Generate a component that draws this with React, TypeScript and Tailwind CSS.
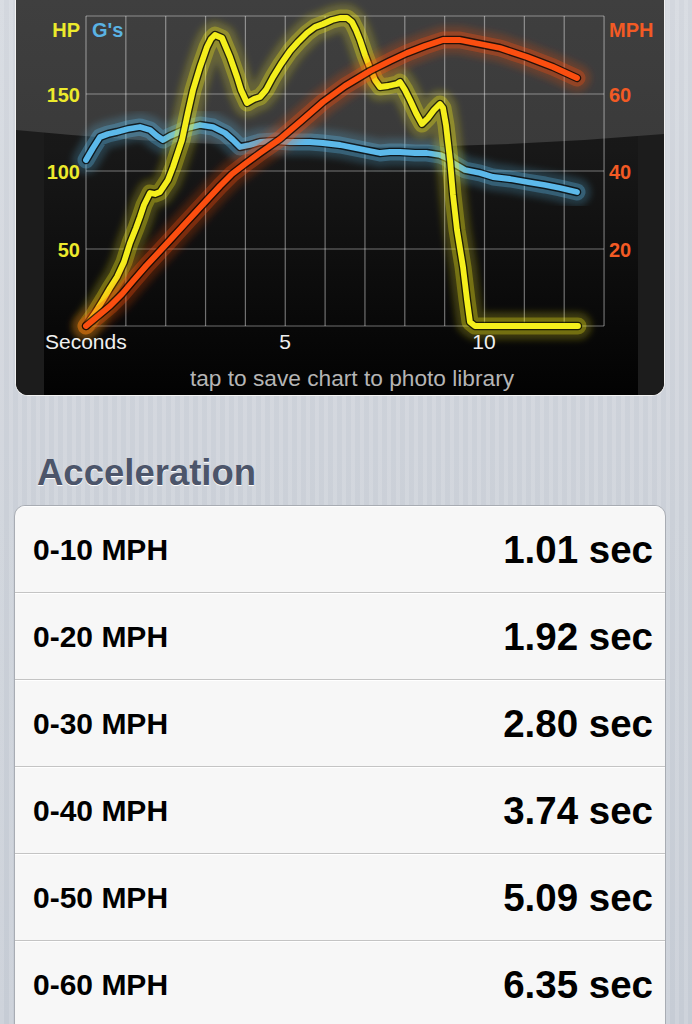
import React from "react";

const X0 = 86;
const DX = 39.85;
const gridX = Array.from({ length: 14 }, (_, i) => X0 + i * DX);
const gridY = [16, 94, 171, 249, 326];

const yellowPts: [number, number][] = [
  [86, 326], [95, 313], [103, 300], [110, 288], [117, 277], [124, 262], [130, 243], [136, 228], [140, 217], [144, 205],
  [147, 199], [150, 193], [155, 194], [160, 192], [164, 186], [168, 180], [173, 167], [178, 152], [182, 140], [188, 112],
  [193, 90], [200, 67], [207, 47], [211, 39], [215, 35], [222, 38], [230, 57], [237, 77], [241, 90], [247, 103],
  [254, 99], [260, 97], [266, 90], [273, 77], [281, 64], [290, 51], [298, 42], [307, 33], [315, 27], [323, 24],
  [332, 20], [340, 18], [347, 18], [352, 22], [356, 30], [360, 40], [365, 55], [370, 68], [375, 80], [380, 87],
  [388, 86], [397, 84], [400, 82], [405, 90], [410, 100], [416, 113], [422, 124], [428, 118], [434, 110], [440, 104],
  [443, 108], [446, 125], [450, 160], [453, 195], [457, 230], [463, 267], [467, 300], [470, 322], [475, 326], [578, 326],
];

const orangePts: [number, number][] = [
  [86, 326], [98, 316], [110, 306], [122, 294], [133, 281], [146, 266], [160, 251], [172, 238], [183, 226], [195, 213],
  [207, 200], [220, 186], [232, 174], [245, 164], [260, 153], [280, 139], [300, 122], [323, 102], [345, 86], [370, 71],
  [390, 61], [407, 53], [425, 46], [443, 40], [460, 40], [480, 44], [500, 48], [527, 57], [553, 67], [577, 78],
];

const bluePts: [number, number][] = [
  [86, 160], [93, 148], [100, 137], [108, 134], [117, 132], [128, 129], [140, 127], [150, 130], [157, 136], [163, 140],
  [170, 136], [177, 133], [188, 128], [200, 125], [213, 127], [225, 133], [233, 140], [240, 147], [250, 145], [260, 142],
  [275, 141], [290, 142], [310, 142], [323, 143], [340, 145], [350, 147], [365, 150], [380, 153], [390, 152], [400, 152],
  [415, 153], [427, 153], [440, 155], [447, 158], [453, 163], [465, 170], [480, 173], [493, 177], [510, 179], [527, 182],
  [545, 185], [560, 188], [577, 192],
];

function toPath(pts: [number, number][]) {
  return pts.map((p, i) => `${i === 0 ? "M" : "L"}${p[0]},${p[1]}`).join(" ");
}

function Curve({ pts, color }: { pts: [number, number][]; color: string }) {
  const d = toPath(pts);
  const common = {
    fill: "none",
    strokeLinecap: "round" as const,
    strokeLinejoin: "round" as const,
  };
  return (
    <g>
      <path d={d} {...common} stroke={color} strokeWidth={28} strokeOpacity={0.22} filter="url(#blur3)" />
      <path d={d} {...common} stroke={color} strokeWidth={17} strokeOpacity={0.3} />
      <path d={d} {...common} stroke="#000" strokeWidth={8.5} strokeOpacity={0.75} />
      <path d={d} {...common} stroke={color} strokeWidth={5.8} />
    </g>
  );
}

function Chart() {
  return (
    <div className="ml-[15px] w-[650px] h-[396px] border-x border-b border-[#f2f2f2] rounded-b-[13px] overflow-hidden bg-[#1c1c1c]">
      <svg width={648} height={395} viewBox="16 0 648 395" className="block">
        <defs>
          <linearGradient id="innerGrad" x1="0" y1="0" x2="0" y2="1">
            <stop offset="0" stopColor="#1c1c1c" />
            <stop offset="0.38" stopColor="#181818" />
            <stop offset="1" stopColor="#020202" />
          </linearGradient>
          <linearGradient id="glossGrad" x1="0" y1="0" x2="0" y2="1">
            <stop offset="0" stopColor="#3f3f3f" />
            <stop offset="1" stopColor="#3a3a3a" />
          </linearGradient>
          <filter id="blur3" x="-20%" y="-20%" width="140%" height="140%">
            <feGaussianBlur stdDeviation="3" />
          </filter>
        </defs>
        <rect x={16} y={0} width={648} height={396} fill="#1c1c1c" />
        <rect x={44} y={0} width={594} height={396} fill="url(#innerGrad)" />
        <path d="M16,0 H664 V134 Q340,162 16,130 Z" fill="url(#glossGrad)" />

        {gridY.map((y) => (
          <line key={`h${y}`} x1={X0} x2={604} y1={y} y2={y} stroke="#ffffff" strokeOpacity={0.42} strokeWidth={1.2} />
        ))}
        {gridX.map((x) => (
          <line key={`v${x}`} x1={x} x2={x} y1={16} y2={326} stroke="#ffffff" strokeOpacity={0.42} strokeWidth={1.2} />
        ))}

        <Curve pts={bluePts} color="#5cb9ea" />
        <Curve pts={yellowPts} color="#f4ef1c" />
        <Curve pts={orangePts} color="#fb4e10" />

        <g fontWeight={700} fontSize={20}>
          <text x={80} y={37} textAnchor="end" fill="#ecea2c">HP</text>
          <text x={92} y={37} fill="#5ab3e4">G's</text>
          <text x={80} y={102} textAnchor="end" fill="#ecea2c">150</text>
          <text x={80} y={179} textAnchor="end" fill="#ecea2c">100</text>
          <text x={80} y={257} textAnchor="end" fill="#ecea2c">50</text>
          <text x={609} y={37} fill="#f25a24">MPH</text>
          <text x={609} y={102} fill="#f25a24">60</text>
          <text x={609} y={179} fill="#f25a24">40</text>
          <text x={609} y={257} fill="#f25a24">20</text>
        </g>
        <g fontSize={21} fill="#f0f0f0">
          <text x={45} y={349}>Seconds</text>
          <text x={285} y={349} textAnchor="middle">5</text>
          <text x={484} y={349} textAnchor="middle">10</text>
        </g>
        <text x={352} y={386} textAnchor="middle" fontSize={22.7} fill="#b5b5b5">
          tap to save chart to photo library
        </text>
      </svg>
    </div>
  );
}

const rows = [
  ["0-10 MPH", "1.01 sec"],
  ["0-20 MPH", "1.92 sec"],
  ["0-30 MPH", "2.80 sec"],
  ["0-40 MPH", "3.74 sec"],
  ["0-50 MPH", "5.09 sec"],
  ["0-60 MPH", "6.35 sec"],
];

export default function App() {
  return (
    <div className="w-[692px] h-[1024px] overflow-hidden font-['Liberation_Sans',Arial,sans-serif] bg-[repeating-linear-gradient(90deg,rgba(255,255,255,0.14)_0px,rgba(255,255,255,0.14)_4px,rgba(255,255,255,0)_4px,rgba(255,255,255,0)_9px),linear-gradient(180deg,#d3d7de_0%,#cbd0d8_50%,#c6ccd5_100%)]">
      <Chart />
      <div className="mt-[57px] mb-[12px] h-[40px] pl-[37px] text-[36.5px] leading-[40px] font-bold text-[#4c556a] [text-shadow:0_1px_0_#ffffff]">
        Acceleration
      </div>
      <div className="ml-[14px] w-[652px] rounded-t-[11px] border border-[#a8acb3] bg-[#f7f7f7] overflow-hidden">
        {rows.map(([label, value]) => (
          <div
            key={label}
            className="h-[87px] border-b border-[#c4c4c4] flex items-center justify-between pl-[18px] pr-[12px] pt-[2px] shadow-[inset_0_1px_0_#ffffff]"
          >
            <span className="text-[30px] leading-none font-bold text-black">{label}</span>
            <span className="text-[38.5px] leading-none font-bold text-black">{value}</span>
          </div>
        ))}
      </div>
    </div>
  );
}
